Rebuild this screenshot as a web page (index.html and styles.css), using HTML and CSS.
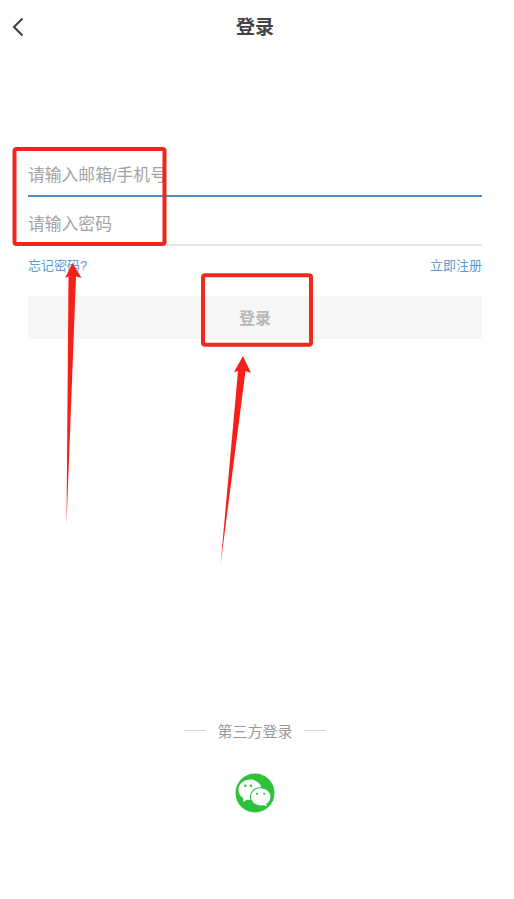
FILE: index.html
```html
<!DOCTYPE html>
<html lang="en">
<head>
    <meta charset="UTF-8">
    <title>登录</title>
    <link rel="stylesheet" href="styles.css">
</head>
<body>
<div id="page">
    <div class="top-bar">
        <a class="back" href="#">
            <svg width="12" height="20" viewBox="0 0 12 20"><path d="M10.5 1.5 L2 10 L10.5 18.5" fill="none" stroke="#444" stroke-width="2.2"/></svg>
        </a>
        <h3>登录</h3>
    </div>
    <form class="login-form">
        <input class="field active" type="text" placeholder="请输入邮箱/手机号">
        <input class="field" type="password" placeholder="请输入密码">
        <div class="links">
            <a href="#">忘记密码?</a>
            <a href="#">立即注册</a>
        </div>
        <button class="submit" type="button">登录</button>
    </form>
    <div class="other-login">
        <div class="other-title">
            <span class="dash"></span>
            <span>第三方登录</span>
            <span class="dash"></span>
        </div>
        <a class="wechat" href="#">
            <svg width="40" height="40" viewBox="0 0 40 40">
                <circle cx="20" cy="20" r="19.5" fill="#2dc13c"/>
                <ellipse cx="15" cy="16.8" rx="11.6" ry="10.2" fill="#fff"/>
                <path d="M8 24 L8.3 29 L14 25.5 Z" fill="#fff"/>
                <ellipse cx="25.7" cy="23.8" rx="10.8" ry="9.6" fill="#2dc13c"/>
                <ellipse cx="25.7" cy="23.8" rx="9.8" ry="8.6" fill="#fff"/>
                <path d="M30 30 L32.5 33.5 L26.5 31.5 Z" fill="#fff"/>
                <circle cx="10.3" cy="12.7" r="1.3" fill="#2dc13c"/>
                <circle cx="16" cy="12.7" r="1.3" fill="#2dc13c"/>
                <circle cx="22" cy="20.8" r="1.1" fill="#2dc13c"/>
                <circle cx="29.3" cy="20.8" r="1.1" fill="#2dc13c"/>
            </svg>
        </a>
    </div>
    <!-- 截图上手工加的红框和箭头 -->
    <svg class="marks" width="514" height="899" viewBox="0 0 514 899">
        <rect x="14.5" y="149" width="150" height="95" rx="2" fill="none" stroke="#f0261c" stroke-width="4"/>
        <rect x="203" y="275.3" width="108" height="69.5" rx="2" fill="none" stroke="#ee2a1e" stroke-width="4"/>
        <path d="M72.5 263 L81.5 278 L76 276.5 L66.5 525 L68.5 276.5 L65 278 Z" fill="#f5201a"/>
        <path d="M243 356 L251 373 L245.5 371 L220.5 565 L238 371 L234 372 Z" fill="#f5201a"/>
    </svg>
</div>
</body>
</html>
```

FILE: styles.css
```css
*{
    padding:0;
    margin:0;
    box-sizing: border-box;
}
a{
    text-decoration: none;
}
body{
    background-color: #fff;
    font-family: "Liberation Sans", "Noto Sans CJK SC", sans-serif;
}
#page{
    position: relative;
    width: 510px;
    height: 899px;
    overflow: hidden;
}
.top-bar{
    position: relative;
    height: 54px;
    line-height: 56px;
    text-align: center;
}
.top-bar h3{
    font-size: 19px;
    color: #444;
}
.back{
    position: absolute;
    left: 12px;
    top: 17px;
    height: 20px;
    line-height: 0;
}
.login-form{
    padding: 97px 28px 0;
}
.field{
    display: block;
    width: 100%;
    height: 49px;
    padding-top: 9px;
    border: none;
    border-bottom: 2px solid #e6e6e6;
    outline: none;
    font-family: inherit;
    font-size: 16.8px;
    color: #333;
}
.field.active{
    height: 46px;
    padding-top: 6px;
    border-bottom-color: #4a8fb5;
}
.field::placeholder{
    color: #a3a3a3;
}
.links{
    display: flex;
    justify-content: space-between;
    margin-top: 11px;
    line-height: 18px;
    font-size: 13px;
}
.links a{
    color: #5b9bd5;
}
.submit{
    display: block;
    width: 100%;
    height: 43px;
    margin-top: 21px;
    padding-bottom: 2px;
    border: none;
    border-radius: 3px;
    background-color: #f6f6f6;
    font-family: inherit;
    font-size: 16px;
    font-weight: bold;
    color: #b8b8b8;
}
.other-login{
    margin-top: 380px;
    text-align: center;
}
.other-title{
    display: flex;
    justify-content: center;
    align-items: center;
    gap: 11px;
    height: 22px;
    font-size: 15px;
    color: #999;
}
.dash{
    width: 22px;
    height: 1px;
    background-color: #d5d5d5;
}
.wechat{
    display: block;
    height: 40px;
    margin-top: 32px;
}
.marks{
    position: absolute;
    left: 0;
    top: 0;
    pointer-events: none;
}
```
